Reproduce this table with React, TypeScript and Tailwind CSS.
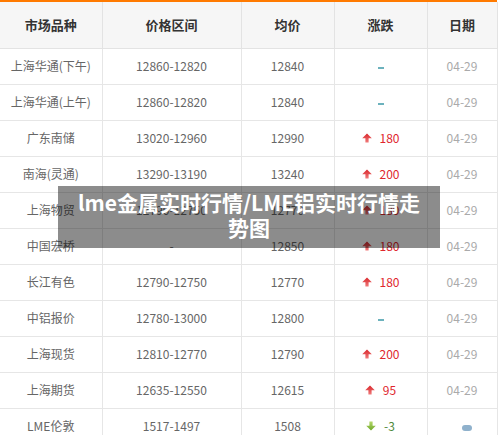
import React from "react";

type Change = { kind: "none" } | { kind: "up"; v: string } | { kind: "down"; v: string };
type Row = { name: string; range: string; avg: string; change: Change; date: string | null };

const rows: Row[] = [
  { name: "上海华通(下午)", range: "12860-12820", avg: "12840", change: { kind: "none" }, date: "04-29" },
  { name: "上海华通(上午)", range: "12860-12820", avg: "12840", change: { kind: "none" }, date: "04-29" },
  { name: "广东南储", range: "13020-12960", avg: "12990", change: { kind: "up", v: "180" }, date: "04-29" },
  { name: "南海(灵通)", range: "13290-13190", avg: "13240", change: { kind: "up", v: "200" }, date: "04-29" },
  { name: "上海物贸", range: "12790-12750", avg: "12770", change: { kind: "up", v: "180" }, date: "04-29" },
  { name: "中国宏桥", range: "-", avg: "12850", change: { kind: "up", v: "180" }, date: "04-29" },
  { name: "长江有色", range: "12790-12750", avg: "12770", change: { kind: "up", v: "180" }, date: "04-29" },
  { name: "中铝报价", range: "12780-13000", avg: "12800", change: { kind: "none" }, date: "04-29" },
  { name: "上海现货", range: "12810-12770", avg: "12790", change: { kind: "up", v: "200" }, date: "04-29" },
  { name: "上海期货", range: "12635-12550", avg: "12615", change: { kind: "up", v: "95" }, date: "04-29" },
  { name: "LME伦敦", range: "1517-1497", avg: "1508", change: { kind: "down", v: "-3" }, date: null },
];

function UpArrow() {
  return (
    <svg width="10" height="10" viewBox="0 0 10 10" className="shrink-0">
      <defs>
        <linearGradient id="ug" x1="0" y1="0" x2="0" y2="1">
          <stop offset="0" stopColor="#d9262b" />
          <stop offset="1" stopColor="#f07a7a" />
        </linearGradient>
      </defs>
      <path d="M5 0.5 L9.8 5.2 L6.6 5.2 L6.6 9.5 L3.4 9.5 L3.4 5.2 L0.2 5.2 Z" fill="url(#ug)" />
    </svg>
  );
}

function DownArrow() {
  return (
    <svg width="10" height="10" viewBox="0 0 10 10" className="shrink-0">
      <defs>
        <linearGradient id="dg" x1="0" y1="0" x2="0" y2="1">
          <stop offset="0" stopColor="#b5d86a" />
          <stop offset="1" stopColor="#6fa82a" />
        </linearGradient>
      </defs>
      <path d="M3.4 0.5 L6.6 0.5 L6.6 4.8 L9.8 4.8 L5 9.5 L0.2 4.8 L3.4 4.8 Z" fill="url(#dg)" />
    </svg>
  );
}

function ChangeCell({ c }: { c: Change }) {
  if (c.kind === "none") {
    return <span className="inline-block w-[6px] h-[2px] bg-[#6cb2bd] align-middle" />;
  }
  if (c.kind === "up") {
    return (
      <span className="inline-flex items-center gap-[8px]">
        <UpArrow />
        <span className="text-[#e0262d]">{c.v}</span>
      </span>
    );
  }
  return (
    <span className="inline-flex items-center gap-[8px]">
      <DownArrow />
      <span className="text-[#4f8a3c]">{c.v}</span>
    </span>
  );
}

export default function App() {
  return (
    <div
      className="relative w-[500px] h-[435px] overflow-hidden bg-white"
      style={{ fontFamily: '"Noto Sans CJK SC", "Noto Sans", sans-serif' }}
    >
      <div className="h-[2px] bg-[#ff7a00] w-[497px]" />
      <table className="border-collapse table-fixed w-[497px] text-[12px] text-[#666]">
        <colgroup>
          <col className="w-[102px]" />
          <col className="w-[139px]" />
          <col className="w-[93px]" />
          <col className="w-[93px]" />
          <col className="w-[70px]" />
        </colgroup>
        <thead>
          <tr className="h-[46px] bg-[#f6f6f6]">
            {["市场品种", "价格区间", "均价", "涨跌", "日期"].map((h) => (
              <th
                key={h}
                className="border-r border-b border-[#e3e3e3] text-center font-bold text-[13px] text-[#333] p-0"
              >
                {h}
              </th>
            ))}
          </tr>
        </thead>
        <tbody>
          {rows.map((r, i) => (
            <tr key={i} className="h-[36px]">
              <td className="border-r border-b border-[#e6e6e6] text-center p-0">{r.name}</td>
              <td className="border-r border-b border-[#e6e6e6] text-center p-0">{r.range}</td>
              <td className="border-r border-b border-[#e6e6e6] text-center p-0">{r.avg}</td>
              <td className="border-r border-b border-[#e6e6e6] text-center p-0">
                <ChangeCell c={r.change} />
              </td>
              <td className="border-r border-b border-[#e6e6e6] text-center p-0 text-[#aaa]">
                {r.date ? (
                  r.date
                ) : (
                  <span className="inline-block ml-[10px] w-[10px] h-[6px] rounded-full bg-[#8fb1cc] align-middle" />
                )}
              </td>
            </tr>
          ))}
        </tbody>
      </table>
      <div className="absolute left-[58px] top-[186px] w-[382px] h-[62px] bg-black/45 px-[10px] pt-[4px]">
        <p className="text-white font-bold text-[21px] leading-[25px] text-center">
          lme金属实时行情/LME铝实时行情走势图
        </p>
      </div>
    </div>
  );
}
